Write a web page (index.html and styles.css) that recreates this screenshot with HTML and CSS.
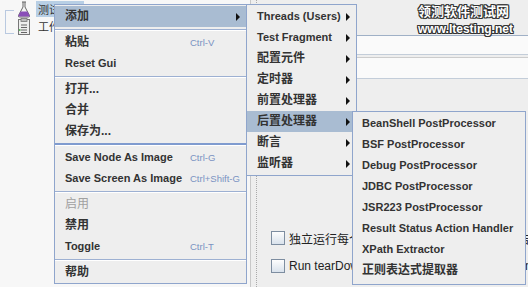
FILE: index.html
```html
<!DOCTYPE html>
<html lang="zh-CN">
<head>
  <meta charset="UTF-8">
  <title>JMeter 右键菜单</title>
  <link rel="stylesheet" href="styles.css">
</head>
<body>
  <div class="app">
    <!-- 左侧树 -->
    <div class="tree">
      <div class="tree-line"></div>
      <div class="node">
        <svg class="ico" width="14" height="17" viewBox="0 0 14 17">
          <path d="M5 1h4M6 1v5L1.5 14.5Q1 16 2.5 16h9q1.5 0 1-1.5L8 6V1" fill="#f4f4f4" stroke="#666" stroke-width="1"/>
          <path d="M3.6 10.5h6.8l2.2 4q.3 1-0.8 1h-9.6q-1.1 0-.8-1z" fill="#8a4fb8"/>
        </svg>
        <span class="label sel">测试计划</span>
      </div>
      <div class="node">
        <svg class="ico" width="14" height="17" viewBox="0 0 14 17">
          <rect x="1.5" y="1.5" width="11" height="15" fill="#eee" stroke="#777"/>
          <rect x="4" y="0.5" width="6" height="3" fill="#bbb" stroke="#777" stroke-width="0.8"/>
          <path d="M4 7h6M4 9.5h6M4 12h6M4 14.5h6" stroke="#666" stroke-width="1"/>
          <path d="M2 12h1.5" stroke="#3a3" stroke-width="1.5"/>
        </svg>
        <span class="label">工作台</span>
      </div>
    </div>
    <div class="split"></div>
    <!-- 右侧面板 -->
    <div class="right">
      <div class="field"></div>
      <div class="field tall"></div>
      <div class="checks">
        <label class="chk"><span class="box"></span>独立运行每个线程组（例如在一个组启动前结束另一个）</label>
        <label class="chk"><span class="box"></span>Run tearDown Thread Groups after shutdown of main threads</label>
      </div>
    </div>
  </div>

  <div class="mark">
    <div class="mark-cn">领测软件测试网</div>
    <div class="mark-en">www.ltesting.net</div>
  </div>

  <!-- 一级菜单 -->
  <div class="menu m1">
    <div class="item cn hot">添加<span class="arrow"></span></div>
    <div class="sep"></div>
    <div class="item cn">粘贴<span class="key">Ctrl-V</span></div>
    <div class="item">Reset Gui</div>
    <div class="sep"></div>
    <div class="item cn">打开...</div>
    <div class="item cn">合并</div>
    <div class="item cn">保存为...</div>
    <div class="sep strong"></div>
    <div class="item">Save Node As Image<span class="key">Ctrl-G</span></div>
    <div class="item">Save Screen As Image<span class="key">Ctrl+Shift-G</span></div>
    <div class="sep"></div>
    <div class="item cn off">启用</div>
    <div class="item cn">禁用</div>
    <div class="item">Toggle<span class="key">Ctrl-T</span></div>
    <div class="sep"></div>
    <div class="item cn">帮助</div>
  </div>

  <!-- 二级菜单 -->
  <div class="menu m2">
    <div class="item">Threads (Users)<span class="arrow"></span></div>
    <div class="item">Test Fragment<span class="arrow"></span></div>
    <div class="item cn">配置元件<span class="arrow"></span></div>
    <div class="item cn">定时器<span class="arrow"></span></div>
    <div class="item cn">前置处理器<span class="arrow"></span></div>
    <div class="item cn hot">后置处理器<span class="arrow"></span></div>
    <div class="item cn">断言<span class="arrow"></span></div>
    <div class="item cn">监听器<span class="arrow"></span></div>
  </div>

  <!-- 三级菜单 -->
  <div class="menu m3">
    <div class="item">BeanShell PostProcessor</div>
    <div class="item">BSF PostProcessor</div>
    <div class="item">Debug PostProcessor</div>
    <div class="item">JDBC PostProcessor</div>
    <div class="item">JSR223 PostProcessor</div>
    <div class="item">Result Status Action Handler</div>
    <div class="item">XPath Extractor</div>
    <div class="item cn">正则表达式提取器</div>
  </div>
</body>
</html>
```

FILE: styles.css
```css
body { margin:0; width:528px; height:287px; overflow:hidden; position:relative; background:#eeeeee;
  font-family:'Liberation Sans', 'Noto Sans CJK SC', sans-serif; font-size:12px; color:#222; }
.app { display:flex; height:287px; }

.tree { flex:none; width:250px; background:#f7f7f7; position:relative; padding:1px 0 0 17px; box-sizing:border-box; }
.tree-line { position:absolute; left:5px; top:10px; width:8px; height:22px; border:1px solid #b9c9e0; border-right:0; }
.node { display:flex; align-items:center; height:16px; margin-bottom:1px; }
.node .ico { margin-right:5px; flex:none; }
.label { font-size:11px; color:#333; padding:0 2px; }
.label.sel { background:#b8cfe5; }

.split { flex:none; width:5px; background:#eee; border-left:1px solid #c8c8c8; border-right:1px dotted #aaa; }
.right { flex:1; min-width:0; overflow:hidden; padding-top:35px; display:flex; flex-direction:column; }
.field { height:18px; background:#fafafa; border-top:1px solid #9fb0c6; border-bottom:1px solid #c3cdd9; }
.field.tall { height:20px; margin-top:2px; border-top:1px solid #ccc; }
.checks { margin-top:152px; padding-left:14px; display:flex; flex-direction:column; gap:14px; }
.chk { display:flex; align-items:center; white-space:nowrap; font-size:12px; color:#222; height:14px; }
.box { width:12px; height:12px; border:1px solid #7d8da0; background:linear-gradient(#fdfdfd, #d9e2ec); margin-right:4px; flex:none; }

.mark { position:absolute; left:418px; top:5px; color:#fff; font-weight:bold; line-height:1;
  text-shadow:1px 0 #333, -1px 0 #333, 0 1px #333, 0 -1px #333, 1px 1px #333, -1px -1px #333, 1px -1px #333, -1px 1px #333; }
.mark-cn { font-size:13px; }
.mark-en { font-size:12px; margin-top:5px; }

.menu { position:absolute; background:#eeeeee; border:1px solid #8fa5cc; padding:1px 0 0; box-sizing:border-box; }
.m1 { left:54px; top:4px; width:193px; }
.m2 { left:246px; top:4px; width:111px; padding-bottom:1px; }
.m3 { left:352px; top:111px; width:174px; padding-bottom:3px; }
.item { position:relative; height:21px; line-height:21px; padding-left:10px; font-size:11px; font-weight:bold; white-space:nowrap; color:#333; }
.item.cn { font-size:12px; }
.m3 .item { padding-left:9px; }
.item.hot { background:#a9bcd2; }
.item.off { color:#a0a0a0; font-weight:normal; }
.key { position:absolute; left:135px; font-size:9.5px; font-weight:normal; color:#7a92c2; }
.arrow { position:absolute; right:6px; top:7px; width:0; height:0; border-left:4px solid #111; border-top:4px solid transparent; border-bottom:4px solid transparent; }
.sep { height:0; margin:2px 0 1px; border-top:1px solid #9db0d2; border-bottom:1px solid #fff; }
.sep.strong { margin:1px 0 1px; border-top:2px solid #7f9bcf; }
```
